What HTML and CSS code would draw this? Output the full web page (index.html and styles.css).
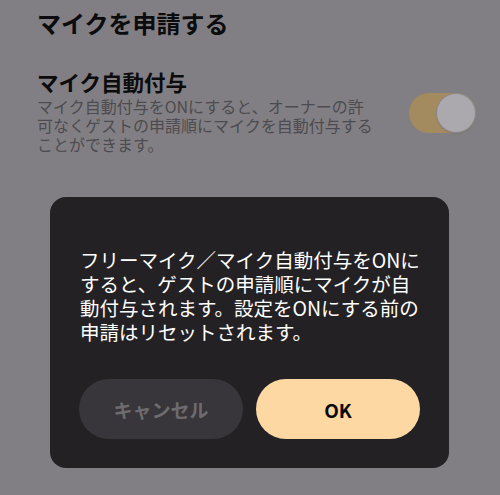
FILE: index.html
```html
<!DOCTYPE html>
<html lang="ja">
<head>
<meta charset="utf-8">
<link rel="stylesheet" href="styles.css">
</head>
<body>
<div class="page">
  <h1 class="section-title">マイクを申請する</h1>
  <div class="setting-row">
    <div class="setting-text">
      <div class="setting-name">マイク自動付与</div>
      <div class="setting-desc">マイク自動付与をONにすると、オーナーの許<br>可なくゲストの申請順にマイクを自動付与する<br>ことができます。</div>
    </div>
    <div class="toggle"><div class="knob"></div></div>
  </div>
</div>
<div class="dialog">
  <p class="dialog-text">フリーマイク／マイク自動付与をONに<br>すると、ゲストの申請順にマイクが自<br>動付与されます。設定をONにする前の<br>申請はリセットされます。</p>
  <div class="dialog-buttons">
    <button class="btn btn-cancel">キャンセル</button>
    <button class="btn btn-ok">OK</button>
  </div>
</div>
</body>
</html>
```
FILE: styles.css
```css
html, body {
  margin: 0;
  padding: 0;
}
body {
  width: 500px;
  height: 495px;
  background: #817f83;
  font-family: "Noto Sans CJK JP", "Noto Sans", sans-serif;
  overflow: hidden;
  position: relative;
}
.page {
  padding: 7px 24px 0 37px;
}
.section-title {
  margin: 0;
  font-size: 24px;
  line-height: 32px;
  font-weight: 700;
  color: #0c0b0d;
}
.setting-row {
  margin-top: 30px;
  display: flex;
  align-items: center;
  justify-content: space-between;
}
.setting-name {
  font-size: 21.5px;
  line-height: 26px;
  font-weight: 700;
  color: #0c0b0d;
}
.setting-desc {
  margin-top: 2px;
  font-size: 16px;
  line-height: 19px;
  color: #4d4b4f;
  white-space: nowrap;
}
.toggle {
  width: 67px;
  height: 40px;
  border-radius: 20px;
  background: #a48a5f;
  display: flex;
  align-items: center;
  justify-content: flex-end;
  margin-top: 2px;
}
.knob {
  width: 38px;
  height: 38px;
  border-radius: 50%;
  background: #aba9ad;
  box-shadow: 0 0 0 1px #8d8a8a, 0 1px 2px rgba(0,0,0,0.25);
  margin-right: 1px;
}
.dialog {
  position: absolute;
  left: 50px;
  top: 197px;
  width: 399px;
  box-sizing: border-box;
  padding: 51px 29px 29px;
  background: #232124;
  border-radius: 16px;
}
.dialog-text {
  margin: 0 0 35px 1px;
  font-size: 19.5px;
  line-height: 24px;
  color: #ffffff;
  white-space: nowrap;
}
.dialog-buttons {
  display: flex;
  gap: 13px;
}
.btn {
  flex: 1;
  height: 60px;
  border: none;
  border-radius: 30px;
  font-family: "Noto Sans CJK JP", "Noto Sans", sans-serif;
  font-size: 19px;
  font-weight: 700;
  padding: 0;
}
.btn-cancel {
  background: #38363a;
  color: #6d6b6f;
}
.btn-ok {
  background: #fed8a3;
  color: #0a0a0a;
}
```
